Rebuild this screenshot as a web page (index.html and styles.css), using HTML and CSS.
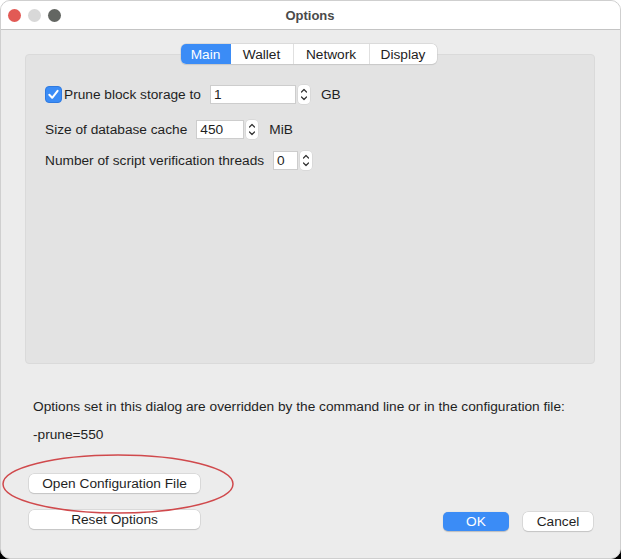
FILE: index.html
```html
<!DOCTYPE html>
<html>
<head>
<meta charset="utf-8">
<title>Options</title>
<link rel="stylesheet" href="styles.css">
</head>
<body>
<div class="window">
  <div class="titlebar">
    <div class="lights">
      <span class="light red"></span>
      <span class="light grey"></span>
      <span class="light dark"></span>
    </div>
    <div class="title">Options</div>
  </div>
  <div class="content">
    <div class="tabs">
      <div class="tab active w-main">Main</div>
      <div class="tab w-wallet">Wallet</div>
      <div class="tab w-network">Network</div>
      <div class="tab w-display">Display</div>
    </div>
    <div class="panel">
      <div class="row row1">
        <span class="checkbox">
          <svg width="17" height="17" viewBox="0 0 17 17"><rect x="0.5" y="0.5" width="16" height="16" rx="3.5" fill="#3b8cf6" stroke="#2f7ae0"/><path d="M4.3 8.8 L7.2 11.8 L12.6 4.9" fill="none" stroke="#fff" stroke-width="2" stroke-linecap="round" stroke-linejoin="round"/></svg>
        </span>
        <span class="label tight">Prune block storage to</span>
        <span class="field f-prune">1</span>
        <span class="spin"><svg width="12" height="19" viewBox="0 0 12 19"><path d="M3.5 7 L6 4.5 L8.5 7" fill="none" stroke="#333" stroke-width="1.2" stroke-linecap="round" stroke-linejoin="round"/><path d="M3.5 12 L6 14.5 L8.5 12" fill="none" stroke="#333" stroke-width="1.2" stroke-linecap="round" stroke-linejoin="round"/></svg></span>
        <span class="unit">GB</span>
      </div>
      <div class="row row2">
        <span class="label">Size of database cache</span>
        <span class="field f-cache">450</span>
        <span class="spin"><svg width="12" height="19" viewBox="0 0 12 19"><path d="M3.5 7 L6 4.5 L8.5 7" fill="none" stroke="#333" stroke-width="1.2" stroke-linecap="round" stroke-linejoin="round"/><path d="M3.5 12 L6 14.5 L8.5 12" fill="none" stroke="#333" stroke-width="1.2" stroke-linecap="round" stroke-linejoin="round"/></svg></span>
        <span class="unit">MiB</span>
      </div>
      <div class="row row3">
        <span class="label">Number of script verification threads</span>
        <span class="field f-threads">0</span>
        <span class="spin"><svg width="12" height="19" viewBox="0 0 12 19"><path d="M3.5 7 L6 4.5 L8.5 7" fill="none" stroke="#333" stroke-width="1.2" stroke-linecap="round" stroke-linejoin="round"/><path d="M3.5 12 L6 14.5 L8.5 12" fill="none" stroke="#333" stroke-width="1.2" stroke-linecap="round" stroke-linejoin="round"/></svg></span>
      </div>
    </div>
    <p class="note">Options set in this dialog are overridden by the command line or in the configuration file:</p>
    <p class="note prune">-prune=550</p>
    <div class="footer">
      <div class="left-buttons">
        <div class="highlight">
          <button class="btn wide">Open Configuration File</button>
          <svg class="ellipse" width="236" height="62" viewBox="0 0 236 62"><ellipse cx="117" cy="31" rx="115" ry="29" fill="none" stroke="#d0494c" stroke-width="1.5"/></svg>
        </div>
        <button class="btn wide">Reset Options</button>
      </div>
      <div class="right-buttons">
        <button class="btn primary">OK</button>
        <button class="btn cancel">Cancel</button>
      </div>
    </div>
  </div>
</div>
</body>
</html>
```

FILE: styles.css
```css
html {
  background: linear-gradient(#ffffff 50%, #000000 50%);
}
body {
  margin: 0;
  font-family: "Liberation Sans", Arial, sans-serif;
  font-size: 13.7px;
  color: #1f1f1f;
}
.window {
  width: 621px;
  height: 559px;
  box-sizing: border-box;
  border-radius: 10px;
  border: 1px solid #cfcfcf;
  background: #ececec;
  overflow: hidden;
  display: flex;
  flex-direction: column;
}
.titlebar {
  height: 28px;
  background: #ffffff;
  border-bottom: 1px solid #c4c4c4;
  display: flex;
  align-items: center;
}
.lights {
  display: flex;
  gap: 7px;
  padding-left: 7px;
}
.light {
  width: 13px;
  height: 13px;
  border-radius: 50%;
  display: block;
}
.light.red { background: #e25a55; }
.light.grey { background: #d8d8d8; }
.light.dark { background: #636662; }
.title {
  flex: 1;
  text-align: center;
  font-weight: bold;
  font-size: 13px;
  color: #4a4a4a;
  margin-right: 61px;
}
.content {
  flex: 1;
  padding: 14px 25px 0 24px;
  display: flex;
  flex-direction: column;
}
.tabs {
  align-self: center;
  display: flex;
  height: 20px;
  background: #ffffff;
  border-radius: 5px;
  box-shadow: 0 0 0 0.5px #c9c9c9, 0 1px 1px rgba(0,0,0,0.12);
  position: relative;
  z-index: 1;
  margin-left: -3px;
}
.tab {
  display: flex;
  align-items: center;
  justify-content: center;
  border-left: 1px solid #e0e0e0;
  color: #222;
}
.tab:first-child { border-left: none; }
.tab.active {
  background: #3b8cf6;
  color: #ffffff;
  border-radius: 5px 0 0 5px;
}
.tab.active + .tab { border-left: none; }
.w-main { width: 50px; }
.w-wallet { width: 62px; }
.w-network { width: 75px; }
.w-display { width: 67px; }
.panel {
  margin-top: -10px;
  height: 310px;
  box-sizing: border-box;
  background: #e3e3e3;
  border: 1px solid #dadada;
  border-radius: 4px;
  padding: 29px 20px 0 19px;
}
.row {
  display: flex;
  align-items: center;
}
.row1 { height: 20px; }
.row2 { height: 20px; margin-top: 15px; }
.row3 { height: 20px; margin-top: 11px; }
.checkbox {
  display: flex;
  margin-right: 2px;
}
.label { margin-right: 9px; }
.field {
  height: 19px;
  box-sizing: border-box;
  background: #ffffff;
  border: 1px solid #cdcdcd;
  display: flex;
  align-items: center;
  padding-left: 3px;
}
.f-prune { width: 86px; }
.f-cache { width: 48px; }
.f-threads { width: 25px; }
.spin {
  display: flex;
  margin-left: 2px;
  background: #ffffff;
  border-radius: 4px;
  box-shadow: 0 0 0 0.5px #cfcfcf;
}
.unit { margin-left: 11px; }
.note {
  margin: 0;
  padding-left: 8px;
  line-height: 16px;
}
.note:first-of-type { margin-top: 35px; }
.note.prune { margin-top: 12px; }
.footer {
  display: flex;
  justify-content: space-between;
  align-items: flex-end;
  margin-top: 31px;
  padding-left: 4px;
  padding-right: 2px;
}
.left-buttons {
  display: flex;
  flex-direction: column;
  gap: 17px;
}
.highlight {
  position: relative;
}
.ellipse {
  position: absolute;
  left: -28px;
  top: -21px;
  pointer-events: none;
}
.btn {
  font-family: "Liberation Sans", Arial, sans-serif;
  font-size: 13.7px;
  color: #1f1f1f;
  height: 19px;
  border: none;
  border-radius: 5px;
  background: #ffffff;
  box-shadow: 0 0 0 0.5px #c8c8c8, 0 1px 1px rgba(0,0,0,0.18);
  padding: 0;
  display: flex;
  align-items: center;
  justify-content: center;
}
.wide { width: 171px; }
.right-buttons {
  display: flex;
  gap: 14px;
  margin-bottom: -2px;
}
.primary {
  width: 66px;
  background: #3b8cf6;
  color: #ffffff;
  box-shadow: 0 0.5px 1px rgba(0,0,0,0.2);
}
.cancel { width: 70px; }
```
